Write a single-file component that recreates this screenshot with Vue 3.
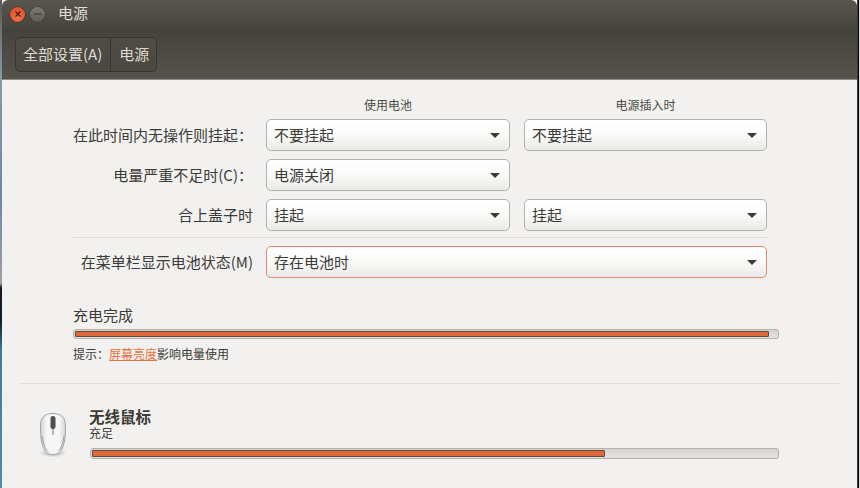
<script setup>
const rows = [
  { label: '在此时间内无操作则挂起：', a: '不要挂起', b: '不要挂起' },
  { label: '电量严重不足时(C)：', a: '电源关闭', b: '' },
  { label: '合上盖子时', a: '挂起', b: '挂起' },
]
</script>

<template>
  <div class="screen">
    <div class="strip-left"></div>
    <div class="window">
      <header class="chrome">
        <div class="titlebar">
          <span class="btn close">
            <svg width="8" height="8" viewBox="0 0 8 8"><path d="M1.5 1.5l5 5M6.5 1.5l-5 5" stroke="#4a1a0c" stroke-width="1.2" /></svg>
          </span>
          <span class="btn min">
            <svg width="8" height="8" viewBox="0 0 8 8"><path d="M0.5 4h7" stroke="#333" stroke-width="1.2" /></svg>
          </span>
          <span class="title">电源</span>
        </div>
        <div class="toolbar">
          <div class="crumbs">
            <span class="crumb">全部设置(A)</span>
            <span class="crumb">电源</span>
          </div>
        </div>
      </header>

      <main class="content">
        <section class="settings">
          <div class="head-row">
            <span></span>
            <span class="col-head">使用电池</span>
            <span class="col-head">电源插入时</span>
          </div>
          <div class="rows">
            <div v-for="r in rows" :key="r.label" class="row">
              <span class="label">{{ r.label }}</span>
              <div class="combo">
                <span>{{ r.a }}</span><i class="caret"></i>
              </div>
              <div v-if="r.b" class="combo">
                <span>{{ r.b }}</span><i class="caret"></i>
              </div>
            </div>
          </div>
          <div class="menu-row">
            <span class="label">在菜单栏显示电池状态(M)</span>
            <div class="combo focused">
              <span>存在电池时</span><i class="caret"></i>
            </div>
          </div>
        </section>

        <section class="battery">
          <div class="battery-title">充电完成</div>
          <div class="bar main-bar"><div class="fill" style="width: 98.85%"></div></div>
          <div class="hint">提示：<a class="link">屏幕亮度</a>影响电量使用</div>
        </section>

        <hr class="divider" />

        <section class="device">
          <svg class="mouse" width="30" height="46" viewBox="0 0 30 46">
            <defs>
              <linearGradient id="body" x1="0" y1="0" x2="1" y2="0">
                <stop offset="0" stop-color="#d4d4d4" />
                <stop offset="0.25" stop-color="#f6f6f6" />
                <stop offset="0.75" stop-color="#f6f6f6" />
                <stop offset="1" stop-color="#d4d4d4" />
              </linearGradient>
              <radialGradient id="shadow">
                <stop offset="0" stop-color="#000" stop-opacity="0.3" />
                <stop offset="1" stop-color="#000" stop-opacity="0" />
              </radialGradient>
            </defs>
            <ellipse cx="14" cy="41" rx="14" ry="4.500" fill="url(#shadow)" />
            <path d="M14 1.500C6 1.500 1.500 5 1.500 14 1.500 24 2.500 32 5 37 7 41 10 42.500 14 42.500S21 41 23 37C25.500 32 26.500 24 26.500 14 26.500 5 22 1.500 14 1.500z" fill="url(#body)" stroke="#a2a2a2" stroke-width="1" />
            <path d="M3 24C4 31 6 37 9 39.500M25 24C24 31 22 37 19 39.500" fill="none" stroke="#9a9a9a" stroke-width="1" />
            <path d="M14 17v6" stroke="#777" stroke-width="1" />
            <rect x="11.500" y="4" width="5" height="13" rx="2.500" fill="#4f4f4f" />
          </svg>
          <div class="device-info">
            <div class="device-name">无线鼠标</div>
            <div class="device-status">充足</div>
            <div class="bar device-bar"><div class="fill" style="width: 74.9%"></div></div>
          </div>
        </section>
      </main>
    </div>
    <div class="strip-right"></div>
  </div>
</template>

<style>
html, body { margin: 0; overflow: hidden; background: #000; }
</style>

<style scoped>
.screen {
  width: 860px;
  height: 488px;
  display: flex;
  overflow: hidden;
  font-family: "Noto Sans CJK SC", "Noto Sans", sans-serif;
  font-size: 15px;
  color: #3c3b37;
}
.strip-left {
  width: 2px;
  background: linear-gradient(180deg, #5a5a55 0%, #8a9aa5 16%, #6a86ad 40%, #a0a0a5 58%, #15191f 59%, #102030 66%, #3a7fa0 72%, #4f8aa8 100%);
}
.strip-right { width: 2px; background: linear-gradient(90deg, #050505 50%, #dcdcdc 50%); }
.window {
  width: 856px;
  display: flex;
  flex-direction: column;
  background: #f2f1ef;
  border-right: 1px solid #3a3a36;
  box-sizing: border-box;
}
.chrome {
  height: 80px;
  flex: none;
  display: flex;
  flex-direction: column;
  border-radius: 6px 6px 0 0;
  overflow: hidden;
  border-bottom: 1px solid #8d8b84;
  box-sizing: border-box;
}
.titlebar {
  height: 28px;
  display: flex;
  align-items: center;
  padding-left: 8px;
  background: linear-gradient(180deg, #59564e 0%, #47453f 100%);
}
.btn {
  width: 15px;
  height: 15px;
  border-radius: 50%;
  display: flex;
  align-items: center;
  justify-content: center;
  margin-right: 5px;
}
.close { background: radial-gradient(circle at 50% 70%, #f0724a, #d9451d); box-shadow: 0 0 0 .5px #3a2a20; }
.min { background: linear-gradient(180deg, #7c7a74, #5f5d57); box-shadow: 0 0 0 .5px #35342f; }
.title { margin-left: 8px; color: #e0dcd5; line-height: 26px; padding-bottom: 2px; }
.toolbar {
  flex: 1;
  display: flex;
  align-items: flex-start;
  padding: 9px 0 0 13px;
  background: linear-gradient(180deg, #44423c 0%, #56534b 100%);
}
.crumbs {
  height: 35px;
  display: flex;
  box-sizing: border-box;
  border: 1px solid #36352f;
  border-radius: 5px;
  background: linear-gradient(180deg, #4f4c45, #4a4841);
}
.crumb {
  padding: 0 8px 0 7px;
  line-height: 31px;
  color: #dfdbd2;
}
.crumb + .crumb { border-left: 1px solid #36352f; padding: 0 7px 0 8px; }

.content { flex: 1; display: flex; flex-direction: column; }
.settings { padding: 16px 0 0 71px; width: 695px; }
.head-row, .row { display: grid; }
.row { column-gap: 13px; grid-template-columns: 180px 244px 244px; }
.head-row { height: 23px; align-items: center; box-sizing: border-box; padding-bottom: 6px; column-gap: 14px; grid-template-columns: 179px 244px 243px; }
.col-head { font-size: 12px; text-align: center; color: #4c4b46; line-height: 16px; }
.rows { display: flex; flex-direction: column; gap: 8px; }
.row { height: 32px; align-items: center; }
.row .combo + .combo { margin-left: 1px; }
.label { text-align: right; white-space: nowrap; padding-bottom: 2px; }
.combo {
  height: 32px;
  box-sizing: border-box;
  display: flex;
  align-items: center;
  justify-content: space-between;
  padding: 0 9px 2px 7px;
  border: 1px solid #b4b2ae;
  border-radius: 5px;
  background: linear-gradient(180deg, #ffffff 0%, #fbfbfa 45%, #ebeae8 100%);
  color: #3c3b37;
}
.caret {
  width: 0;
  height: 0;
  margin-top: 2px;
  border-left: 5px solid transparent;
  border-right: 5px solid transparent;
  border-top: 5px solid #3c3b37;
}
.menu-row {
  margin-top: 6px;
  padding-top: 8px;
  border-top: 1px solid #dddcd9;
  display: grid;
  grid-template-columns: 180px 501px;
  column-gap: 13px;
  align-items: center;
  width: 694px;
}
.focused { border-color: #e08a6b; }

.battery { padding: 27px 0 0 71px; }
.battery-title { line-height: 20px; }
.bar {
  box-sizing: border-box;
  border: 1px solid #b3b2ae;
  border-radius: 3px;
  background: linear-gradient(180deg, #d3d2cf, #e4e3e0);
  padding: 1px;
}
.main-bar { width: 706px; height: 10px; margin-top: 4px; }
.fill {
  height: 100%;
  box-sizing: border-box;
  background: #df6837;
  border: 1px solid #5a4a42;
  border-radius: 1px;
}
.hint { font-size: 12px; margin-top: 6px; line-height: 18px; color: #3c3b37; }
.link { color: #e9703f; text-decoration: underline; }
.divider {
  margin: 20px 18px 0 18px;
  border: 0;
  border-top: 1px solid #dddcd9;
}
.device { display: flex; padding: 22px 0 0 37px; }
.mouse { flex: none; margin-right: 20px; margin-top: 6px; }
.device-info { width: 690px; }
.device-name { font-size: 15.500px; font-weight: 700; line-height: 20px; }
.device-status { font-size: 12px; line-height: 14px; }
.device-bar { width: 689px; height: 11px; margin: 8px 0 0 1px; }
</style>
